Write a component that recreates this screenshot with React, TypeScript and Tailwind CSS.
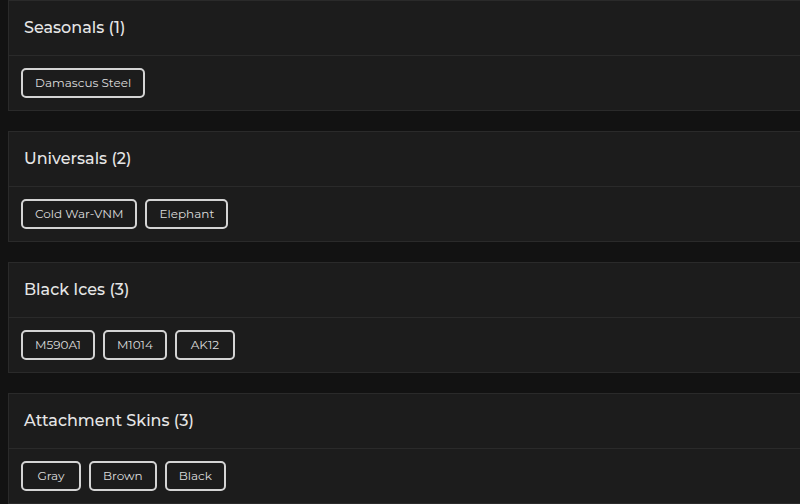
const groups = [
  { title: "Seasonals", items: ["Damascus Steel"] },
  { title: "Universals", items: ["Cold War-VNM", "Elephant"] },
  { title: "Black Ices", items: ["M590A1", "M1014", "AK12"] },
  { title: "Attachment Skins", items: ["Gray", "Brown", "Black"] },
];

export default function App() {
  return (
    <div className="h-[504px] w-[800px] overflow-hidden bg-[#121212] pl-2 font-['Montserrat','Noto_Sans',sans-serif]">
      <div className="flex w-[800px] flex-col gap-5">
        {groups.map((g) => (
          <div key={g.title} className="border border-[#2a2a2a] bg-[#1c1c1c]">
            <div className="flex h-[55px] items-center border-b border-[#2a2a2a] px-[15px]">
              <h2 className="text-[16px] font-medium text-[#e6e6e6]">
                {g.title} ({g.items.length})
              </h2>
            </div>
            <div className="flex h-[54px] items-center gap-2 px-3">
              {g.items.map((item) => (
                <button
                  key={item}
                  className="h-[30px] min-w-[60px] rounded-[5px] border-2 border-[#d4d4d4] px-3 text-[12px] text-[#dcdcdc]"
                >
                  {item}
                </button>
              ))}
            </div>
          </div>
        ))}
      </div>
    </div>
  );
}
